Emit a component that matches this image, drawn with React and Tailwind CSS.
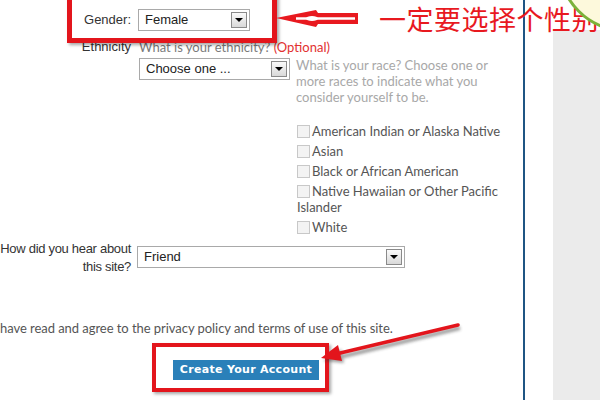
import React from "react";

const sans = { fontFamily: '"Liberation Sans", Arial, sans-serif' };
const lato = { fontFamily: 'Lato, "Open Sans", sans-serif' };

const DropBtn = () => (
  <div className="w-[16px] h-[16px] border border-[#8a8a8a] bg-gradient-to-b from-[#fafafa] to-[#d9d9d9] flex items-center justify-center">
    <div className="w-0 h-0 border-l-[4px] border-r-[4px] border-t-[4px] border-l-transparent border-r-transparent border-t-black" />
  </div>
);

const Select = ({ value, className }) => (
  <div
    className={`h-[22px] border border-[#a9a9a9] bg-white flex items-center justify-between pl-[6px] pr-[2px] text-[13px] text-[#222] ${className}`}
    style={sans}
  >
    <span>{value}</span>
    <DropBtn />
  </div>
);

const Check = ({ children }) => (
  <div className="leading-[16px] whitespace-nowrap">
    <span className="inline-block align-[-2px] w-[13px] h-[13px] border border-[#c8c8c8] bg-[#f3f3f3] mr-[2px]" />
    {children}
  </div>
);

const races = [
  "American Indian or Alaska Native",
  "Asian",
  "Black or African American",
];

const App = () => {
  return (
    <div className="relative w-[600px] h-[400px] overflow-hidden bg-white flex">
      <div className="w-[523px] pt-[9px]">
        <div className="flex items-center h-[22px]">
          <div className="w-[131px] text-right text-[13px] text-[#333]" style={sans}>
            Gender:
          </div>
          <Select value="Female" className="ml-[7px] w-[112px]" />
        </div>

        <div className="flex mt-[9px]">
          <div className="w-[131px] text-right text-[13px] leading-[14px] text-[#333]" style={sans}>
            Ethnicity
          </div>
          <div className="ml-[8px] flex flex-col">
            <div className="text-[13px] leading-[14px] text-[#7a7a7a]" style={lato}>
              What is your ethnicity? <span className="text-[#e2312f]">(Optional)</span>
            </div>
            <div className="flex mt-[3px]">
              <Select value="Choose one ..." className="w-[151px] mt-[1px]" />
              <div className="ml-[6px] w-[215px] text-[13px] leading-[16px] text-[#a8a8a8]" style={lato}>
                What is your race? Choose one or<br />
                more races to indicate what you<br />
                consider yourself to be.
              </div>
            </div>
            <div className="ml-[158px] mt-[18px] flex flex-col gap-[4px] text-[13px] text-[#555]" style={lato}>
              {races.map((r) => (
                <Check key={r}>{r}</Check>
              ))}
              <Check>
                Native Hawaiian or Other Pacific
                <br />
                Islander
              </Check>
              <Check>White</Check>
            </div>
          </div>
        </div>

        <div className="flex mt-[5px]">
          <div
            className="w-[140px] -ml-[9px] text-right text-[13px] leading-[18px] tracking-[-0.3px] text-[#333] whitespace-nowrap"
            style={sans}
          >
            How did you hear about
            <br />
            this site?
          </div>
          <Select value="Friend" className="ml-[6px] mt-[6px] w-[268px]" />
        </div>

        <div className="mt-[44px] text-[13px] leading-[16px] tracking-[-0.05px] text-[#555] whitespace-nowrap" style={lato}>
          have read and agree to the privacy policy and terms of use of this site.
        </div>

        <button
          className="mt-[24px] ml-[173px] w-[146px] h-[20px] bg-[#2a80b9] text-white text-[11px] font-bold tracking-[0.3px] flex items-center justify-center"
          style={{ fontFamily: '"DejaVu Sans", Verdana, sans-serif' }}
        >
          Create Your Account
        </button>
      </div>

      <div className="w-[2px] bg-[#1f5583]" />
      <div className="w-[28px]" />
      <div className="flex-1 mt-[30px] bg-[#ebebeb]" />

      {/* annotations */}
      <div className="absolute left-[67px] top-[-10px] w-[210px] h-[53px] border-[5px] border-[#e3151c] shadow-[2px_2px_3px_rgba(0,0,0,0.35)]" />
      <div className="absolute left-[152px] top-[343px] w-[177px] h-[49px] border-[4px] border-[#e3151c] shadow-[2px_2px_3px_rgba(0,0,0,0.35)]" />

      <div
        className="absolute left-[379px] top-[3px] text-[27px] leading-[32px] tracking-[0.5px] text-[#e8191f] whitespace-nowrap"
        style={{ fontFamily: '"Noto Sans CJK SC", sans-serif' }}
      >
        一定要选择个性别
      </div>

      <svg className="absolute inset-0 pointer-events-none" width="600" height="400" viewBox="0 0 600 400">
        <defs>
          <filter id="sh" x="-10%" y="-50%" width="120%" height="200%">
            <feGaussianBlur stdDeviation="1.5" />
          </filter>
        </defs>
        <circle cx="624" cy="-34" r="64" fill="#fdf9dc" stroke="#7cb23a" strokeWidth="3" />
        <polygon points="276,18 316,10 318,13 358,13 358,24 318,24 316,27" fill="#e8191f" />
        <line x1="296" y1="18.5" x2="355" y2="18.5" stroke="#fff" strokeWidth="2.5" />
        <ellipse cx="312" cy="18.5" rx="6" ry="2.5" fill="#fff" />

        <g opacity="0.45" filter="url(#sh)" transform="translate(2,3)">
          <line x1="458" y1="325" x2="338" y2="354" stroke="#333" strokeWidth="4" />
          <polygon points="321,358 342,360 339,346" fill="#333" />
        </g>
        <line x1="458" y1="325" x2="336" y2="354" stroke="#e3151c" strokeWidth="3.5" strokeLinecap="round" />
        <polygon points="321,358 342,361 338,345" fill="#e3151c" />
      </svg>
    </div>
  );
};

export default App;
